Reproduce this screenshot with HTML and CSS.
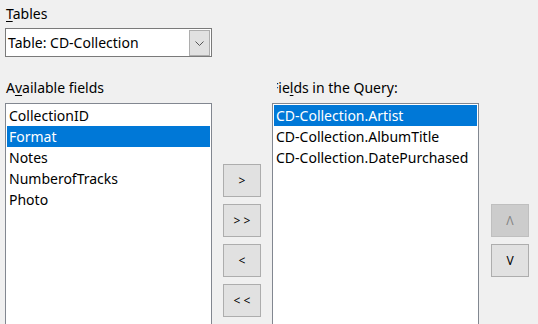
FILE: index.html
```html
<!DOCTYPE html>
<html>
<head>
<meta charset="utf-8">
<link rel="stylesheet" href="styles.css">
</head>
<body>
<div class="page">
  <div class="tables-block">
    <div class="label"><u>T</u>ables</div>
    <div class="combo">
      <span class="combo-text">Table: CD-Collection</span>
      <span class="combo-btn">
        <svg width="9" height="5" viewBox="0 0 9 5"><polyline points="0.5,0.5 4.5,4.5 8.5,0.5" fill="none" stroke="#555" stroke-width="1"/></svg>
      </span>
    </div>
  </div>
  <div class="main">
    <div class="label col-label">A<u>v</u>ailable fields</div>
    <div></div>
    <div class="col-label query-label"><div class="clip-box"><span class="clip">Fie<u>l</u>ds in the Query:</span></div></div>
    <div></div>

    <div class="list">
      <div class="item">CollectionID</div>
      <div class="item selected">Format</div>
      <div class="item">Notes</div>
      <div class="item">NumberofTracks</div>
      <div class="item">Photo</div>
    </div>
    <div class="btn-col mid">
      <button class="btn">&gt;</button>
      <button class="btn">&gt; &gt;</button>
      <button class="btn">&lt;</button>
      <button class="btn">&lt; &lt;</button>
    </div>
    <div class="list">
      <div class="item selected">CD-Collection.Artist</div>
      <div class="item">CD-Collection.AlbumTitle</div>
      <div class="item">CD-Collection.DatePurchased</div>
    </div>
    <div class="btn-col side">
      <button class="btn disabled">&#923;</button>
      <button class="btn">V</button>
    </div>
  </div>
</div>
</body>
</html>
```
FILE: styles.css
```css
html, body {
  margin: 0;
  padding: 0;
}
body {
  background: #f0f0f0;
  font-family: "Noto Sans", sans-serif;
  font-size: 14px;
  color: #000;
  width: 538px;
  height: 324px;
  overflow: hidden;
}
.page {
  padding-left: 5px;
}
.label {
  line-height: 20px;
  padding-left: 1px;
}
u {
  text-decoration-thickness: 1px;
  text-underline-offset: 2px;
}
.tables-block .label {
  padding-top: 4px;
  height: 24px;
}
.combo {
  width: 205px;
  height: 27px;
  border: 1px solid #7a7a7a;
  background: #fff;
  display: flex;
  align-items: center;
  justify-content: space-between;
}
.combo-text {
  padding-left: 2px;
}
.combo-btn {
  width: 19px;
  height: 24px;
  margin: 1px 1px 0 0;
  align-self: flex-start;
  border: 1px solid #adadad;
  background: #e1e1e1;
  display: flex;
  align-items: center;
  justify-content: center;
}
.main {
  display: grid;
  grid-template-columns: 207px 38px 207px 38px;
  column-gap: 11px;
  margin-top: 21px;
}
.col-label {
  height: 25px;
  line-height: 20px;
}
.query-label {
  padding-left: 5px;
}
.clip-box {
  overflow: hidden;
  white-space: nowrap;
}
.clip {
  display: block;
  margin-left: -6px;
}
.list {
  height: 219px;
  border: 1px solid #828790;
  background: #fff;
  padding: 1px 1px 0 1px;
}
.item {
  height: 21px;
  line-height: 21px;
  padding-left: 2px;
  white-space: nowrap;
}
.item.selected {
  background: #0078d7;
  color: #fff;
}
.btn-col {
  display: flex;
  flex-direction: column;
  gap: 7px;
}
.btn-col.mid {
  padding-top: 61px;
}
.btn-col.side {
  padding-top: 101px;
  margin-left: 1px;
}
.btn {
  width: 38px;
  height: 33px;
  border: 1px solid #adadad;
  background: #e1e1e1;
  font-family: "Noto Sans", sans-serif;
  font-size: 12px;
  color: #000;
  padding: 0;
  margin: 0;
}
.btn.disabled {
  background: #cccccc;
  border-color: #bfbfbf;
  color: #838383;
}
```
